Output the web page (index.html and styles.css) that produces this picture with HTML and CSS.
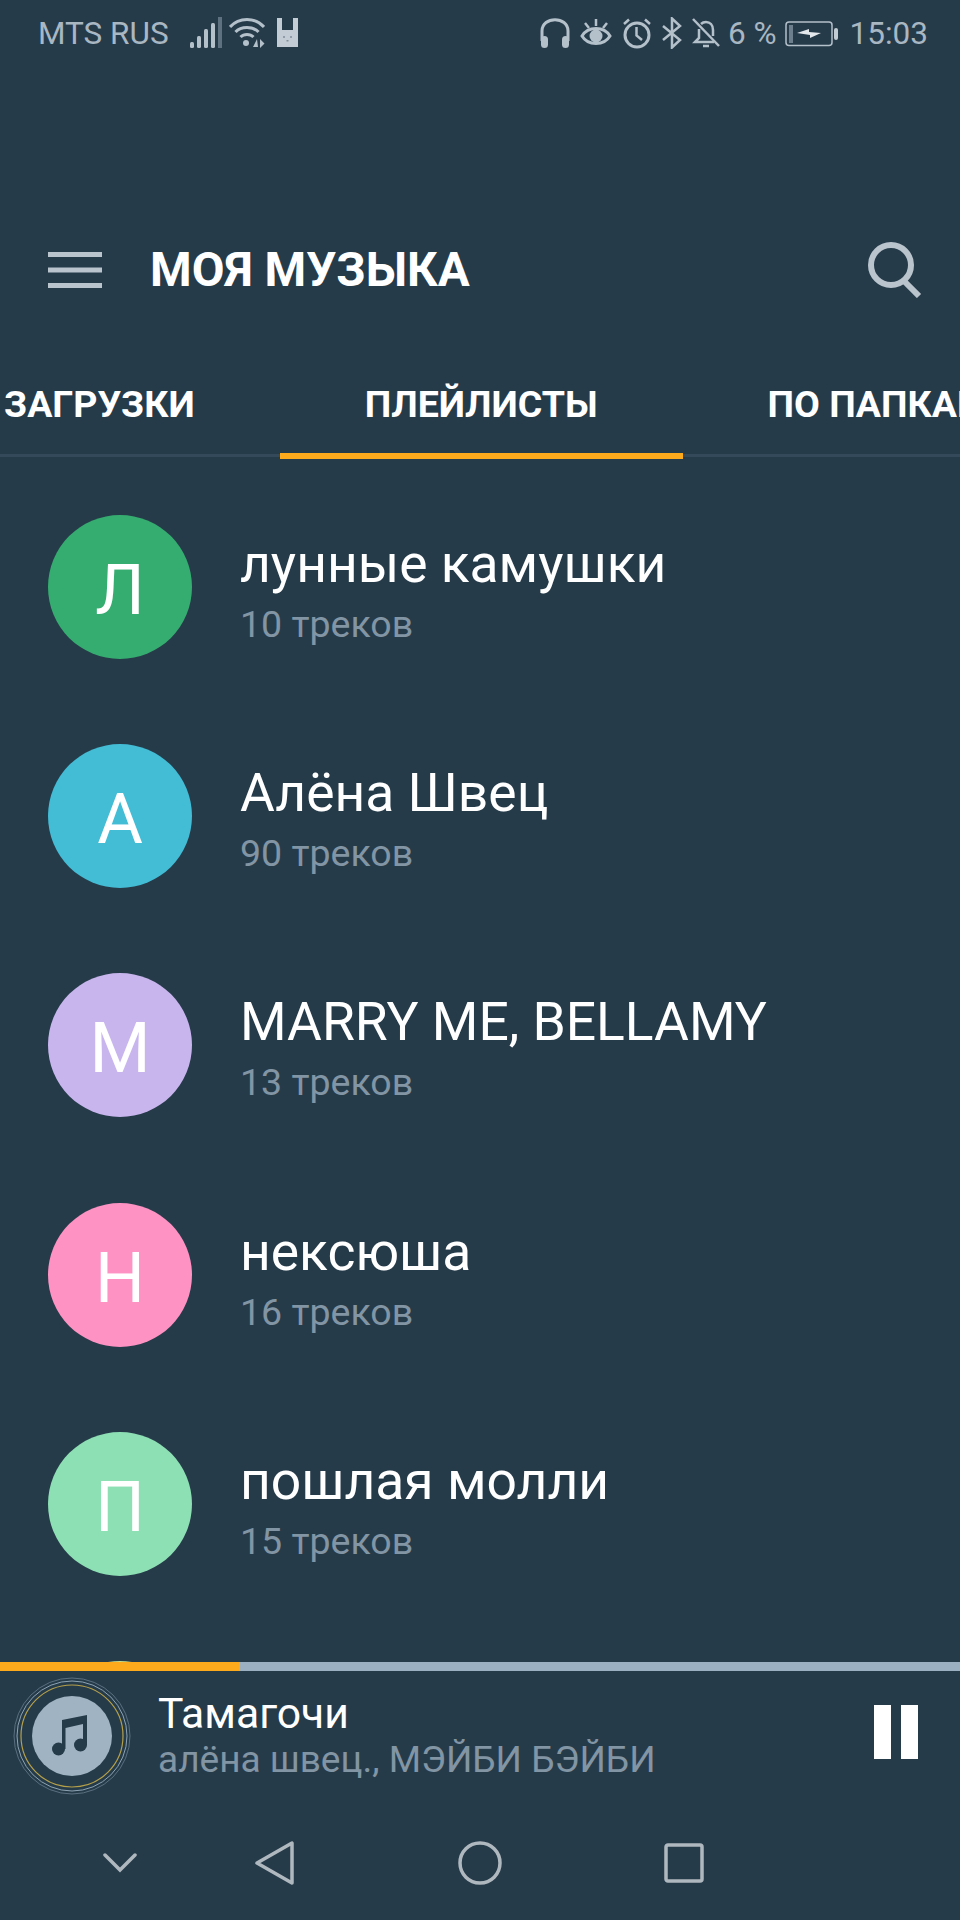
FILE: index.html
```html
<!DOCTYPE html>
<html>
<head>
    <meta charset="utf-8">
    <link rel="stylesheet" href="styles.css">
</head>
<body>
    <div class="app">
        <div class="statusbar">
            <div class="status-group">
                <span class="carrier">MTS RUS</span>
                <svg class="ic-signal" width="32" height="32" viewBox="0 0 32 32">
                    <rect x="0" y="25" width="4" height="6" rx="1.5" fill="#b4c0ca"/>
                    <rect x="7" y="19" width="4" height="12" rx="1.5" fill="#b4c0ca"/>
                    <rect x="14" y="12" width="4" height="19" rx="1.5" fill="#b4c0ca"/>
                    <rect x="21" y="6" width="4" height="25" rx="1.5" fill="#b4c0ca"/>
                    <rect x="28" y="0" width="4" height="31" fill="#5d7181"/>
                </svg>
                <svg class="ic-wifi" width="36" height="32" viewBox="0 0 36 32" fill="none" stroke="#b4c0ca" stroke-width="3">
                    <path d="M1 10 C 10 0, 26 0, 35 10"/>
                    <path d="M6.500 15 C 12 9, 24 9, 29.500 15"/>
                    <path d="M11.500 20 C 15 16.500, 21 16.500, 24.500 20"/>
                    <circle cx="17" cy="26" r="3" fill="#b4c0ca" stroke="none"/>
                    <path d="M28 22 L24 30 H29 Z M31 22 L35.500 26.500 L31 31 Z" fill="#b4c0ca" stroke="none"/>
                </svg>
                <svg class="ic-bunny" width="22" height="32" viewBox="0 0 22 32">
                    <path d="M0 1 H5 V13 H16 V1 H21 V30 H0 Z" fill="#c3ccd4"/>
                    <circle cx="7" cy="20" r="1" fill="#7f8e9a"/>
                    <circle cx="14" cy="20" r="1" fill="#7f8e9a"/>
                    <rect x="9.500" y="23" width="2" height="1.500" fill="#7f8e9a"/>
                </svg>
            </div>
            <div class="status-group status-right">
                <svg width="30" height="32" viewBox="0 0 30 32" fill="none" stroke="#b4c0ca" stroke-width="3">
                    <path d="M2 24 V14 C2 -1, 28 -1, 28 14 V24"/>
                    <rect x="1" y="19" width="7" height="12" rx="3.500" fill="#b4c0ca" stroke="none"/>
                    <rect x="22" y="19" width="7" height="12" rx="3.500" fill="#b4c0ca" stroke="none"/>
                </svg>
                <svg width="32" height="32" viewBox="0 0 32 32" fill="none" stroke="#b4c0ca" stroke-width="3">
                    <path d="M2 19 C8 9, 24 9, 30 19 C24 29, 8 29, 2 19 Z"/>
                    <circle cx="16" cy="19" r="6.500" fill="#b4c0ca" stroke="none"/>
                    <path d="M16 2 V9 M5 6 L9 11 M27 6 L23 11" stroke-width="2.500"/>
                </svg>
                <svg width="30" height="32" viewBox="0 0 30 32" fill="none" stroke="#b4c0ca" stroke-width="3">
                    <circle cx="15" cy="18" r="12"/>
                    <path d="M14.500 10 V18.500 L20 23" stroke-width="2.500"/>
                    <path d="M2 7 L7 2.500 M28 7 L23 2.500" stroke-width="2.500"/>
                </svg>
                <svg width="20" height="32" viewBox="0 0 20 32" fill="none" stroke="#b4c0ca" stroke-width="2.500">
                    <path d="M1 9 L18 23 L10 30.500 V1.500 L18 9 L1 23"/>
                </svg>
                <svg width="28" height="32" viewBox="0 0 28 32" fill="none" stroke="#b4c0ca" stroke-width="2.500">
                    <path d="M7 12 V21 L3 25 H22 M21 19 V13 C21 8, 18 5, 14 5 C12 5, 10.500 5.500, 9 7"/>
                    <path d="M11 29 H17"/>
                    <path d="M1 2 L27 29"/>
                </svg>
                <span class="percent">6 %</span>
                <svg class="ic-battery" width="54" height="32" viewBox="0 0 54 32" fill="none">
                    <rect x="1" y="5" width="46" height="23.500" rx="3" stroke="#b4c0ca" stroke-width="1.500"/>
                    <rect x="4" y="8" width="4" height="18" fill="#6d7f8d"/>
                    <path d="M12 16 L24 12 L24 15 L36 16 L25 21 L25 18 Z" fill="#e3e8ec"/>
                    <rect x="49" y="11" width="4" height="12" rx="2" fill="#c3ccd4"/>
                </svg>
                <span class="clock">15:03</span>
            </div>
        </div>

        <div class="toolbar">
            <svg class="ic-menu" width="54" height="36" viewBox="0 0 54 36">
                <rect x="0" y="0" width="54" height="5" fill="#b9c4cd"/>
                <rect x="0" y="15.500" width="54" height="5" fill="#b9c4cd"/>
                <rect x="0" y="31" width="54" height="5" fill="#b9c4cd"/>
            </svg>
            <h1 class="title">МОЯ МУЗЫКА</h1>
            <svg class="ic-search" width="54" height="56" viewBox="0 0 54 56" fill="none" stroke="#b9c4cd" stroke-width="6">
                <circle cx="23" cy="23" r="20"/>
                <path d="M36 39 L51 54"/>
            </svg>
        </div>

        <div class="tabs">
            <div class="tab">ЗАГРУЗКИ</div>
            <div class="tab active">ПЛЕЙЛИСТЫ</div>
            <div class="tab">ПО ПАПКАМ</div>
        </div>

        <div class="playlists">
            <div class="row">
                <div class="avatar green">Л</div>
                <div class="row-text">
                    <div class="row-name">лунные камушки</div>
                    <div class="row-count">10 треков</div>
                </div>
            </div>
            <div class="row">
                <div class="avatar cyan">А</div>
                <div class="row-text">
                    <div class="row-name">Алёна Швец</div>
                    <div class="row-count">90 треков</div>
                </div>
            </div>
            <div class="row">
                <div class="avatar lavender">M</div>
                <div class="row-text">
                    <div class="row-name">MARRY ME, BELLAMY</div>
                    <div class="row-count">13 треков</div>
                </div>
            </div>
            <div class="row">
                <div class="avatar pink">Н</div>
                <div class="row-text">
                    <div class="row-name">нексюша</div>
                    <div class="row-count">16 треков</div>
                </div>
            </div>
            <div class="row">
                <div class="avatar mint">П</div>
                <div class="row-text">
                    <div class="row-name">пошлая молли</div>
                    <div class="row-count">15 треков</div>
                </div>
            </div>
            <div class="row">
                <div class="avatar lime"></div>
            </div>
        </div>

        <div class="progress">
            <div class="progress-done"></div>
        </div>

        <div class="player">
            <svg class="disc" width="120" height="120" viewBox="0 0 120 120" fill="none">
                <circle cx="60" cy="60" r="58" stroke="#5a7080" stroke-width="1"/>
                <circle cx="60" cy="60" r="55" stroke="#8ea3b3" stroke-width="1"/>
                <circle cx="60" cy="60" r="51" stroke="#b5a04a" stroke-width="1.200"/>
                <circle cx="60" cy="60" r="40" fill="#9fb3c2"/>
                <path d="M50 44 L75 39 V69 H71 V48 L53.500 52 V73 H50 Z" fill="#263b4a"/>
                <circle cx="46.500" cy="73" r="6.500" fill="#263b4a"/>
                <circle cx="68.500" cy="69" r="6.500" fill="#263b4a"/>
            </svg>
            <div class="track">
                <div class="track-name">Тамагочи</div>
                <div class="track-artist">алёна швец., МЭЙБИ БЭЙБИ</div>
            </div>
            <div class="pause">
                <span class="pause-bar"></span>
                <span class="pause-bar"></span>
            </div>
        </div>

        <div class="navbar">
            <svg class="ic-down" width="34" height="20" viewBox="0 0 34 20" fill="none" stroke="#b0b8bf" stroke-width="3.500" stroke-linecap="round">
                <path d="M2 2 L17 17 L32 2"/>
            </svg>
            <svg class="ic-back" width="39" height="44" viewBox="0 0 39 44" fill="none" stroke="#b0b8bf" stroke-width="3.500" stroke-linejoin="round">
                <path d="M37 2 V42 L2 22 Z"/>
            </svg>
            <svg class="ic-home" width="44" height="44" viewBox="0 0 44 44" fill="none" stroke="#b0b8bf" stroke-width="3.500">
                <circle cx="22" cy="22" r="20"/>
            </svg>
            <svg class="ic-recent" width="40" height="40" viewBox="0 0 40 40" fill="none" stroke="#b0b8bf" stroke-width="3.500">
                <rect x="2" y="2" width="36" height="36" rx="2"/>
            </svg>
        </div>
    </div>
</body>
</html>
```

FILE: styles.css
```css
body {
    margin: 0;
    background-color: #263b4a;
    font-family: Roboto, sans-serif;
    color: #ffffff;
}
.app {
    width: 960px;
    height: 1920px;
    display: flex;
    flex-direction: column;
    overflow: hidden;
}
.statusbar {
    height: 66px;
    flex: none;
    display: flex;
    justify-content: space-between;
    align-items: center;
    padding: 0 32px 0 38px;
    color: #a9b7c2;
    font-size: 31.5px;
}
.status-group {
    display: flex;
    align-items: center;
    gap: 10px;
}
.carrier {
    margin-right: 11px;
}
.ic-wifi {
    margin-left: -3px;
}
.ic-bunny {
    margin-left: 2px;
}
.percent {
    margin-left: -2px;
}
.ic-battery {
    margin-left: -2px;
}
.clock {
    margin-left: 1px;
}
.toolbar {
    margin-top: 138px;
    height: 132px;
    flex: none;
    display: flex;
    align-items: center;
    padding: 0 38px 0 48px;
}
.title {
    flex: 1;
    margin: 0 0 0 48px;
    font-size: 47.6px;
    font-weight: 700;
}
.tabs {
    height: 123px;
    flex: none;
    display: flex;
    margin-left: -81px;
    background: linear-gradient(#34495a, #34495a) 0 calc(100% - 2px) / 100% 3px no-repeat;
}
.tab {
    flex: none;
    box-sizing: border-box;
    height: 123px;
    padding: 18px 85px 0;
    display: flex;
    align-items: center;
    font-size: 37.5px;
    font-weight: 700;
    white-space: nowrap;
    border-bottom: 6px solid transparent;
}
.tab.active {
    border-bottom-color: #fdab1c;
}
.playlists {
    flex: 1;
    min-height: 0;
    overflow: hidden;
    padding-top: 13px;
}
.row {
    height: 229.33px;
    display: flex;
    align-items: center;
    padding-left: 48px;
}
.avatar {
    width: 144px;
    height: 144px;
    flex: none;
    border-radius: 50%;
    display: flex;
    align-items: center;
    justify-content: center;
    font-size: 70px;
    padding-top: 6px;
    box-sizing: border-box;
}
.green { background-color: #36ad70; }
.cyan { background-color: #43bcd5; }
.lavender { background-color: #c8b5ee; }
.pink { background-color: #fd92c3; }
.mint { background-color: #8de0b4; }
.lime { background-color: #c5dc8e; }
.row-text {
    margin-left: 48px;
    padding-top: 12px;
}
.row-name {
    font-size: 53.4px;
    line-height: 62px;
}
.row-count {
    font-size: 37.5px;
    line-height: 58px;
    color: #8295a4;
}
.progress {
    height: 9px;
    flex: none;
    background-color: #9bb0c0;
}
.progress-done {
    width: 240px;
    height: 100%;
    background-color: #fdab1c;
}
.player {
    height: 139px;
    flex: none;
    display: flex;
    align-items: center;
    padding: 0 42px 0 12px;
    box-sizing: border-box;
}
.disc {
    flex: none;
    margin-bottom: 10px;
}
.track {
    flex: 1;
    margin-left: 26px;
    margin-bottom: 10px;
}
.track-name {
    font-size: 42.7px;
    line-height: 48px;
}
.track-artist {
    font-size: 37px;
    line-height: 46px;
    color: #8295a4;
}
.pause {
    display: flex;
    gap: 10px;
    margin-bottom: 18px;
}
.pause-bar {
    width: 17px;
    height: 54px;
    background-color: #ffffff;
}
.navbar {
    height: 110px;
    flex: none;
    display: flex;
    align-items: center;
    padding-left: 103px;
    padding-bottom: 4px;
    box-sizing: border-box;
}
.ic-back {
    margin-left: 118px;
}
.ic-home {
    margin-left: 164px;
}
.ic-recent {
    margin-left: 162px;
}
```
